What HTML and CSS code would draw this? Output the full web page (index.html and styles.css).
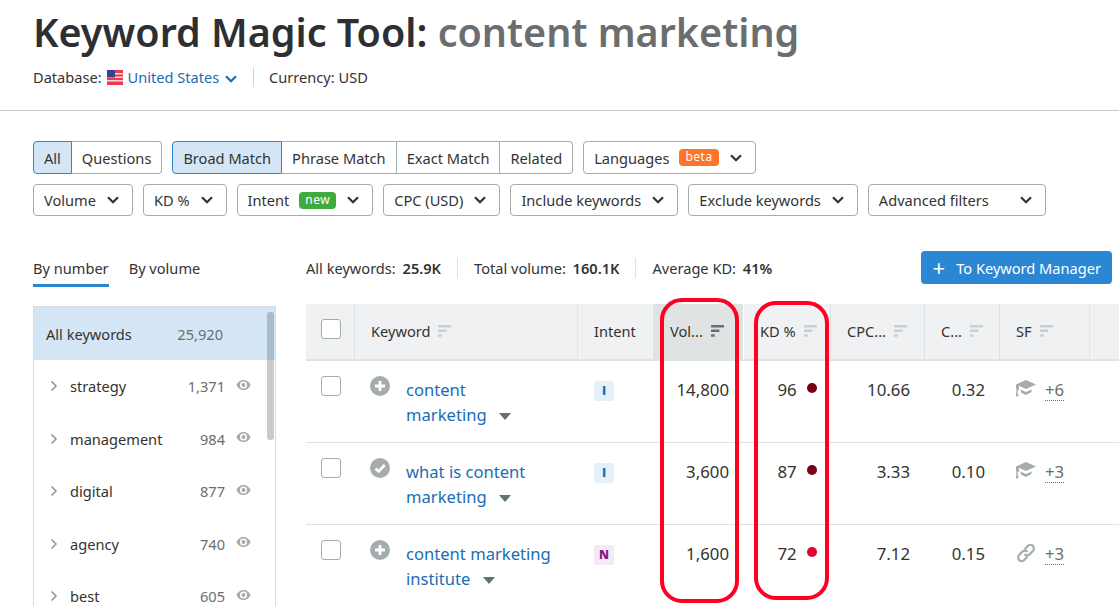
FILE: index.html
```html
<!DOCTYPE html>
<html lang="en">
<head>
  <meta charset="UTF-8">
  <title>Keyword Magic Tool: content marketing</title>
  <link rel="stylesheet" href="styles.css">
</head>
<body>
  <svg class="sprite" aria-hidden="true">
    <symbol id="chev" viewBox="0 0 14 10"><path d="M2 2.2 7 7.2l5-5" fill="none" stroke="currentColor" stroke-width="2.2"/></symbol>
    <symbol id="sort" viewBox="0 0 14 13"><path d="M0 0h14v2.6H0zM0 5h9v2.6H0zM0 10h4v2.6H0z" fill="currentColor"/></symbol>
    <symbol id="eye" viewBox="0 0 16 12"><path d="M8 .6C4.6.6 1.800 2.800.4 6c1.400 3.200 4.200 5.400 7.600 5.400s6.200-2.200 7.600-5.400C14.200 2.800 11.400.6 8 .6zm0 9.200A3.800 3.800 0 1 1 8 2.200a3.800 3.800 0 0 1 0 7.600z" fill="currentColor"/><circle cx="8" cy="6" r="2.100" fill="currentColor"/></symbol>
    <symbol id="right" viewBox="0 0 8 12"><path d="M1.500 1.500 6 6l-4.500 4.500" fill="none" stroke="currentColor" stroke-width="1.500"/></symbol>
    <symbol id="add" viewBox="0 0 20 20"><circle cx="10" cy="10" r="10" fill="#a4acad"/><path d="M10 5v10M5 10h10" stroke="#fff" stroke-width="2.800"/></symbol>
    <symbol id="done" viewBox="0 0 20 20"><circle cx="10" cy="10" r="10" fill="#a4acad"/><path d="m5.500 10.500 3.200 3 6-6.500" fill="none" stroke="#fff" stroke-width="2.600"/></symbol>
    <symbol id="grad" viewBox="0 0 20 18"><path d="M10 0 20 4.500 10 9 3.500 6.100 3 6v4.500L0 8V4.500z" fill="#a4acad"/><path d="M1 5v9" stroke="#a4acad" stroke-width="1.400"/><circle cx="1" cy="15" r="1.500" fill="#a4acad"/><path d="M4.500 9.500 10 12l5.500-2.500V12L10 15 5 12.500z" fill="#a4acad"/></symbol>
    <symbol id="link" viewBox="0 0 20 20"><g fill="none" stroke="#a4acad" stroke-width="2.200"><path d="M8.500 6.500 11.800 3a3.500 3.500 0 0 1 5.100 4.900l-3.400 3.500a3.500 3.500 0 0 1-5-.2"/><path d="M11.500 13.500 8.200 17a3.500 3.500 0 0 1-5.100-4.900l3.400-3.500a3.500 3.500 0 0 1 5 .2"/></g></symbol>
  </svg>

  <header class="page-head">
    <h1>Keyword Magic Tool: <span class="query">content marketing</span></h1>
    <div class="meta">
      <span>Database:</span>
      <svg class="flag" viewBox="0 0 16 15" aria-hidden="true">
        <rect width="16" height="15" fill="#f0384f"/>
        <path d="M0 3h16v1.500H0zM0 6.500h16V8H0zM0 10h16v1.500H0z" fill="#fbd5da"/>
        <rect width="8" height="7.500" fill="#3b3f8f"/>
      </svg>
      <a class="db-link">United States <svg class="chev"><use href="#chev"/></svg></a>
      <span class="meta-sep"></span>
      <span>Currency: USD</span>
    </div>
  </header>

  <section class="filters">
    <div class="filter-row">
      <div class="btn-group">
        <button class="btn on">All</button>
        <button class="btn">Questions</button>
      </div>
      <div class="btn-group">
        <button class="btn on">Broad Match</button>
        <button class="btn">Phrase Match</button>
        <button class="btn">Exact Match</button>
        <button class="btn">Related</button>
      </div>
      <button class="btn solo">Languages <span class="tag tag-beta">beta</span><svg class="chev"><use href="#chev"/></svg></button>
    </div>
    <div class="filter-row row-two">
      <button class="btn solo">Volume<svg class="chev"><use href="#chev"/></svg></button>
      <button class="btn solo">KD %<svg class="chev"><use href="#chev"/></svg></button>
      <button class="btn solo">Intent <span class="tag tag-new">new</span><svg class="chev"><use href="#chev"/></svg></button>
      <button class="btn solo">CPC (USD)<svg class="chev"><use href="#chev"/></svg></button>
      <button class="btn solo">Include keywords<svg class="chev"><use href="#chev"/></svg></button>
      <button class="btn solo">Exclude keywords<svg class="chev"><use href="#chev"/></svg></button>
      <button class="btn solo wide">Advanced filters<svg class="chev"><use href="#chev"/></svg></button>
    </div>
  </section>

  <div class="content">
    <aside class="sidebar">
      <div class="tabs">
        <span class="tab active">By number</span>
        <span class="tab">By volume</span>
      </div>
      <div class="groups">
        <div class="scroll"><div class="thumb"></div></div>
        <div class="group all"><span>All keywords</span><span class="num">25,920</span></div>
        <div class="group"><svg class="arrow"><use href="#right"/></svg><span class="name">strategy</span><span class="num">1,371</span><svg class="eye"><use href="#eye"/></svg></div>
        <div class="group"><svg class="arrow"><use href="#right"/></svg><span class="name">management</span><span class="num">984</span><svg class="eye"><use href="#eye"/></svg></div>
        <div class="group"><svg class="arrow"><use href="#right"/></svg><span class="name">digital</span><span class="num">877</span><svg class="eye"><use href="#eye"/></svg></div>
        <div class="group"><svg class="arrow"><use href="#right"/></svg><span class="name">agency</span><span class="num">740</span><svg class="eye"><use href="#eye"/></svg></div>
        <div class="group"><svg class="arrow"><use href="#right"/></svg><span class="name">best</span><span class="num">605</span><svg class="eye"><use href="#eye"/></svg></div>
      </div>
    </aside>

    <main class="results">
      <div class="summary">
        <span>All keywords: <b>25.9K</b></span>
        <span class="sum-sep"></span>
        <span>Total volume: <b>160.1K</b></span>
        <span class="sum-sep"></span>
        <span>Average KD: <b>41%</b></span>
        <button class="to-manager"><span class="plus">+</span>To Keyword Manager</button>
      </div>

      <div class="table">
        <div class="row head">
          <div class="cell"><span class="check"></span></div>
          <div class="cell">Keyword <svg class="sort"><use href="#sort"/></svg></div>
          <div class="cell">Intent</div>
          <div class="cell sorted">Vol... <svg class="sort"><use href="#sort"/></svg></div>
          <div class="cell kd-head">KD % <svg class="sort"><use href="#sort"/></svg></div>
          <div class="cell">CPC... <svg class="sort"><use href="#sort"/></svg></div>
          <div class="cell">C... <svg class="sort"><use href="#sort"/></svg></div>
          <div class="cell">SF <svg class="sort"><use href="#sort"/></svg></div>
          <div class="cell"></div>
        </div>

        <div class="row">
          <div class="cell"><span class="check"></span></div>
          <div class="cell kw"><svg class="state"><use href="#add"/></svg><a>content<br>marketing <i class="caret"></i></a></div>
          <div class="cell"><span class="intent i">I</span></div>
          <div class="cell right">14,800</div>
          <div class="cell kd">96 <i class="dot dark"></i></div>
          <div class="cell right">10.66</div>
          <div class="cell right">0.32</div>
          <div class="cell sf"><svg class="sf-icon"><use href="#grad"/></svg><span class="more">+6</span></div>
          <div class="cell"></div>
        </div>

        <div class="row">
          <div class="cell"><span class="check"></span></div>
          <div class="cell kw"><svg class="state"><use href="#done"/></svg><a>what is content<br>marketing <i class="caret"></i></a></div>
          <div class="cell"><span class="intent i">I</span></div>
          <div class="cell right">3,600</div>
          <div class="cell kd">87 <i class="dot dark"></i></div>
          <div class="cell right">3.33</div>
          <div class="cell right">0.10</div>
          <div class="cell sf"><svg class="sf-icon"><use href="#grad"/></svg><span class="more">+3</span></div>
          <div class="cell"></div>
        </div>

        <div class="row">
          <div class="cell"><span class="check"></span></div>
          <div class="cell kw"><svg class="state"><use href="#add"/></svg><a>content marketing<br>institute <i class="caret"></i></a></div>
          <div class="cell"><span class="intent n">N</span></div>
          <div class="cell right">1,600</div>
          <div class="cell kd">72 <i class="dot red"></i></div>
          <div class="cell right">7.12</div>
          <div class="cell right">0.15</div>
          <div class="cell sf"><svg class="sf-icon"><use href="#link"/></svg><span class="more">+3</span></div>
          <div class="cell"></div>
        </div>
      </div>
    </main>
  </div>

  <div class="mark mark-vol"></div>
  <div class="mark mark-kd"></div>
</body>
</html>
```

FILE: styles.css
```css
html, body {
  height: 606px;
  overflow: hidden;
}

body {
  margin: 0;
  position: relative;
  background: #fff;
  color: #333;
  font-family: "Noto Sans", "Open Sans", sans-serif;
  font-size: 14.6px;
}

.sprite {
  display: none;
}

button {
  font: inherit;
  color: inherit;
}

.page-head {
  height: 111px;
  padding: 0 33px;
  box-sizing: border-box;
  border-bottom: 1px solid #c4c9cb;
}

h1 {
  margin: 0;
  padding-top: 6px;
  font-size: 39.500px;
  line-height: 52px;
  font-weight: 600;
  color: #2d2f33;
}

.query {
  color: #6b6e70;
}

.meta {
  display: flex;
  align-items: center;
  gap: 5px;
  margin-top: 9px;
  height: 20px;
}

.flag {
  width: 16px;
  height: 15px;
}

.db-link {
  color: #1a6db4;
}

.chev {
  width: 14px;
  height: 10px;
  color: #333;
  flex: none;
}

.db-link .chev {
  color: #1a6db4;
  margin-left: 1px;
  vertical-align: -1px;
}

.meta-sep {
  width: 1px;
  height: 20px;
  background: #d0d4d6;
  margin: 0 10px;
}

.filters {
  padding: 30px 33px 0;
}

.filter-row {
  display: flex;
  gap: 10px;
  height: 33px;
}

.row-two {
  margin-top: 10px;
  height: 32px;
}

.btn-group {
  display: flex;
}

.btn {
  display: flex;
  align-items: center;
  height: 100%;
  padding: 0 10px;
  background: #fff;
  border: 1px solid #a4acad;
  border-left-width: 0;
  white-space: nowrap;
}

.btn-group .btn:first-child {
  border-left-width: 1px;
  border-radius: 4px 0 0 4px;
}

.btn-group .btn:last-child {
  border-radius: 0 4px 4px 0;
}

.btn.on {
  background: #d4e6f5;
  border-color: #2b87d3;
  border-left-width: 1px;
}

.solo {
  border-left-width: 1px;
  border-radius: 4px;
  gap: 10px;
  padding-right: 12px;
}

.wide .chev {
  margin-left: 20px;
}

.tag {
  padding: 0 6px;
  height: 17px;
  line-height: 16px;
  border-radius: 4px;
  color: #fff;
  font-size: 12px;
  letter-spacing: .5px;
}

.tag-beta {
  background: #ff7426;
}

.tag-new {
  background: #3fab3f;
}

.content {
  display: flex;
  padding: 0 7px 0 33px;
  margin-top: 34px;
  gap: 30px;
}

.sidebar {
  width: 243px;
  flex: none;
}

.tabs {
  display: flex;
  gap: 20px;
  height: 38px;
}

.tab {
  height: 34px;
  line-height: 36px;
  box-sizing: content-box;
}

.tab.active {
  border-bottom: 3px solid #2b87d3;
}

.groups {
  position: relative;
  margin-top: 18px;
  border: 1px solid #d9dcde;
  border-bottom: 0;
  height: 320px;
}

.scroll {
  position: absolute;
  top: 5px;
  right: 1px;
  width: 7px;
  height: 128px;
  border-radius: 3px;
  background: #cbcbcb;
}

.thumb {
  height: 48px;
  border-radius: 3px 3px 0 0;
  background: #a9bccb;
}

.group {
  display: flex;
  align-items: center;
  height: 52.500px;
  padding: 0 50px 0 16px;
}

.group.all {
  height: 53px;
  justify-content: space-between;
  padding: 0 52px 0 12px;
  background: #d4e6f5;
}

.num {
  color: #6b6e70;
}

.group .name {
  flex: 1;
  margin-left: 12px;
}

.arrow {
  width: 8px;
  height: 12px;
  color: #8b9596;
}

.eye {
  position: absolute;
  right: 24px;
  width: 15px;
  height: 12px;
  margin-top: -3px;
  color: #a4acad;
}

.results {
  flex: 1;
  min-width: 0;
}

.summary {
  display: flex;
  align-items: center;
  gap: 16px;
  height: 33px;
  margin-top: 1px;
}

.summary b {
  margin-left: 3px;
  font-weight: 600;
}

.sum-sep {
  width: 1px;
  height: 20px;
  background: #e0e2e4;
}

.to-manager {
  margin-left: auto;
  height: 33px;
  padding: 0 11px 0 12px;
  border: 0;
  border-radius: 4px;
  background: #2b87d3;
  color: #fff;
}

.plus {
  font-size: 22px;
  line-height: 20px;
  margin-right: 11px;
  vertical-align: -2px;
}

.table {
  width: 813px;
  margin-top: 20px;
}

.row {
  display: grid;
  grid-template-columns: 49px 223px 76px 90px 87px 94px 75px 90px 29px;
  height: 82px;
  border-bottom: 1px solid #dfe3e4;
  box-sizing: border-box;
}

.row:last-child {
  border-bottom: 0;
}

.cell {
  padding: 16px 15px 0;
  box-sizing: border-box;
  line-height: 26px;
  min-width: 0;
  white-space: nowrap;
}

.cell:first-child {
  padding: 15px;
}

.head {
  height: 57px;
  background: #eff1f2;
  border-bottom-width: 2px;
}

.head .cell {
  display: flex;
  align-items: center;
  gap: 8px;
  padding-top: 0;
  padding-left: 16px;
  padding-bottom: 2px;
  border-right: 1px solid #e0e3e5;
}

.head .cell:last-child {
  border-right: 0;
}

.head .cell:first-child {
  padding: 0 0 6px 15px;
}

.head .sorted {
  background: #dfe3e4;
  border-right-color: #fff;
}

.head .sorted .sort {
  color: #5f7275;
}

.sort {
  width: 13px;
  height: 12px;
  color: #c9cfd1;
  flex: none;
}

.check {
  display: block;
  width: 20px;
  height: 20px;
  box-sizing: border-box;
  border: 1px solid #a4acad;
  border-radius: 3px;
  background: #fff;
}

.kw {
  display: flex;
  gap: 16px;
  font-size: 16.600px;
  line-height: 25px;
  padding-top: 16px;
}

.kw a {
  color: #1a6db4;
}

.state {
  width: 20px;
  height: 20px;
  flex: none;
  margin-top: -1px;
}

.caret {
  display: inline-block;
  margin-left: 8px;
  vertical-align: 1px;
  border: 6px solid transparent;
  border-top: 7px solid #5f7275;
  border-bottom: 0;
}

.intent {
  display: block;
  width: 20px;
  height: 20px;
  margin-top: 4px;
  margin-left: 1px;
  border-radius: 3px;
  font-family: "Open Sans", sans-serif;
  font-size: 12px;
  line-height: 20px;
  font-weight: 800;
  text-align: center;
}

.intent.i {
  background: #e4f1fb;
  color: #1a6db4;
}

.intent.n {
  background: #f5e9f5;
  color: #8b1a8b;
}

.right,
.kd {
  font-size: 16.800px;
  text-align: right;
}

.kd {
  padding-right: 14px;
}

.dot {
  display: inline-block;
  width: 10px;
  height: 10px;
  margin-left: 6px;
  border-radius: 50%;
  vertical-align: 3px;
}

.dot.dark {
  background: #7a0017;
}

.dot.red {
  background: #e60033;
}

.sf {
  display: flex;
  align-items: flex-start;
  gap: 9px;
  padding-left: 16px;
  font-size: 16.800px;
}

.sf-icon {
  width: 20px;
  height: 20px;
  margin-top: 2px;
}

.more {
  color: #6b6e70;
  border-bottom: 1px dotted #6b6e70;
  line-height: 20px;
  margin-top: 3px;
}

.mark {
  position: absolute;
  box-sizing: border-box;
  border: 4px solid #ff0022;
  border-radius: 22px;
  pointer-events: none;
}

.mark-vol {
  left: 660px;
  top: 298px;
  width: 79px;
  height: 305px;
}

.mark-kd {
  left: 754px;
  top: 301px;
  width: 75px;
  height: 299px;
}
```
